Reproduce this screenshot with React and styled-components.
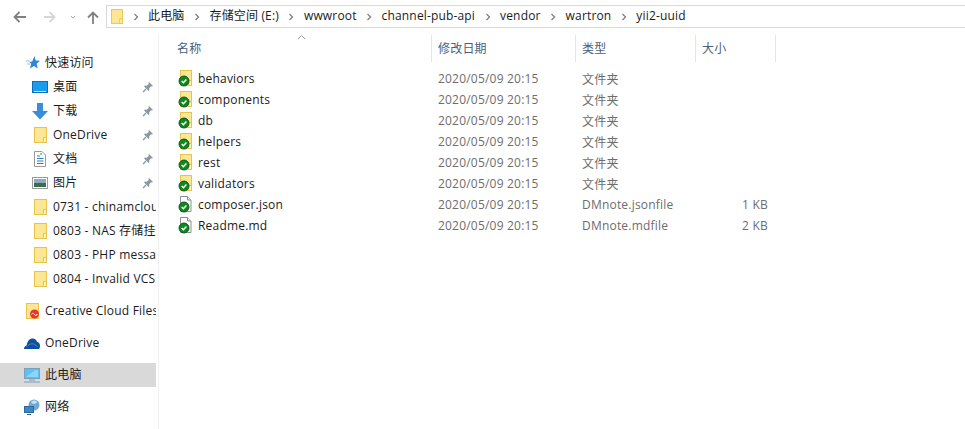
import React from 'react';
import styled, { createGlobalStyle } from 'styled-components';

const GlobalStyle = createGlobalStyle`
  html, body { margin: 0; padding: 0; background: #fff; }
  body {
    font-family: "Open Sans", "Noto Sans CJK SC", sans-serif;
    font-size: 12px;
    letter-spacing: 0.2px;
    color: #1b1b1b;
  }
`;

const Window = styled.div`
  width: 965px;
  height: 429px;
  overflow: hidden;
  display: flex;
  flex-direction: column;
`;

const Toolbar = styled.div`
  height: 35px;
  flex: none;
  display: flex;
  align-items: flex-start;
  padding: 5px 0 0 9px;
  box-sizing: border-box;
`;

const NavButtons = styled.div`
  display: flex;
  align-items: center;
  height: 24px;
  width: 97px;
  flex: none;
`;

const NavButton = styled.span`
  display: flex;
  flex: none;
  width: ${(p) => p.$w}px;
  justify-content: center;
`;

const AddressBar = styled.div`
  flex: 1;
  height: 23px;
  margin-right: -2px;
  border: 1px solid #d9d9d9;
  box-sizing: border-box;
  display: flex;
  align-items: center;
  padding-left: 4px;
`;

const Crumb = styled.span`
  color: #1a1a1a;
  white-space: nowrap;
  font-size: 12px;
  letter-spacing: 0.16px;
  line-height: 18px;
  margin-top: -1px;
`;

const CrumbSep = styled.span`
  width: 25px;
  display: flex;
  justify-content: center;
  flex: none;
`;

const Body = styled.div`
  flex: 1;
  display: flex;
  min-height: 0;
`;

const Sidebar = styled.div`
  width: 159px;
  flex: none;
  box-sizing: border-box;
  border-right: 1px solid #f0f0f0;
  padding-top: 16px;
  display: flex;
  flex-direction: column;
`;

const NavRow = styled.div`
  width: 156px;
  height: 24px;
  flex: none;
  display: flex;
  align-items: center;
  overflow: hidden;
  position: relative;
  padding-left: ${(p) => (p.$child ? 32 : 24)}px;
  margin-top: ${(p) => p.$gap || 0}px;
  box-sizing: border-box;
  background: ${(p) => (p.$active ? '#d9d9d9' : 'transparent')};
`;

const NavIcon = styled.span`
  width: 21px;
  height: 18px;
  flex: none;
  display: flex;
  align-items: center;
  padding-left: ${(p) => p.$inset || 0}px;
  box-sizing: border-box;
`;

const NavLabel = styled.span`
  white-space: nowrap;
  color: #1b1b1b;
  margin-top: -2px;
`;

const PinSlot = styled.span`
  position: absolute;
  left: 142px;
  top: 5px;
  width: 12px;
  height: 12px;
`;

const Main = styled.div`
  flex: 1;
  min-width: 0;
  display: flex;
  flex-direction: column;
`;

const HeaderRow = styled.div`
  height: 27px;
  display: flex;
  position: relative;
  flex: none;
  margin-bottom: 6px;
`;

const HeaderCell = styled.div`
  width: ${(p) => p.$w}px;
  box-sizing: border-box;
  padding-left: ${(p) => p.$pl || 6}px;
  padding-bottom: 2px;
  border-right: 1px solid #e5e5e5;
  color: #4c607a;
  display: flex;
  align-items: center;
  flex: none;
`;

const SortCaret = styled.svg`
  position: absolute;
  left: 138px;
  top: -1px;
`;

const FileRow = styled.div`
  display: flex;
  height: 21px;
  align-items: center;
  flex: none;
`;

const NameCell = styled.div`
  width: 272px;
  box-sizing: border-box;
  padding-left: 19px;
  display: flex;
  align-items: center;
  flex: none;
  color: #1b1b1b;
`;

const FileIconSlot = styled.span`
  width: 20px;
  height: 18px;
  margin-top: 1px;
  flex: none;
  display: block;
`;

const Cell = styled.div`
  width: ${(p) => p.$w}px;
  box-sizing: border-box;
  padding-left: 7px;
  flex: none;
  color: #6d6d6d;
  white-space: nowrap;
`;

const SizeCell = styled.div`
  width: 73px;
  flex: none;
  text-align: right;
  color: #6d6d6d;
  white-space: nowrap;
`;

const Chevron = () => (
  <svg width="6" height="8" viewBox="0 0 6 8">
    <path d="M1.5 1l3 3-3 3" fill="none" stroke="#808080" strokeWidth="1.3" />
  </svg>
);

const Folder = ({ size = 13 }) => (
  <svg width={size} height={size + 3} viewBox="0 0 13 16">
    <rect x="0.5" y="0.5" width="12" height="15" fill="#fde694" stroke="#e9c44d" />
    <rect x="9.5" y="10.5" width="3" height="5" fill="#fff3c4" stroke="#e9c44d" />
  </svg>
);

const PinIcon = () => (
  <svg width="12" height="12" viewBox="0 0 12 12">
    <path d="M7 1l4 4-1 .6-1-.3L7.200 7.200l.2 1.900-.8.8L2.100 5.400l.8-.8 1.900.2L6.700 2.900l-.3-1z" fill="#8a97a6" />
    <path d="M4 8L1 11" stroke="#8a97a6" strokeWidth="1.200" />
  </svg>
);

const SyncBadge = () => (
  <g>
    <circle cx="6" cy="11" r="5" fill="#0b8a1f" stroke="#0a4f16" strokeWidth="0.900" />
    <path d="M3.700 11l1.700 1.700 3-3.200" fill="none" stroke="#fff" strokeWidth="1.500" />
  </g>
);

const SyncFolder = () => (
  <svg width="16" height="18" viewBox="0 0 16 18">
    <rect x="2.500" y="0.500" width="11" height="15" fill="#fde694" stroke="#e9c44d" />
    <rect x="10.500" y="10.500" width="3" height="5" fill="#fff3c4" stroke="#e9c44d" />
    <SyncBadge />
  </svg>
);

const SyncDoc = () => (
  <svg width="16" height="18" viewBox="0 0 16 18">
    <path d="M2.500.5h7l3.500 3.500v11.500H2.500z" fill="#fff" stroke="#8f8f8f" />
    <path d="M9.500.5V4H13" fill="#eee" stroke="#8f8f8f" />
    <SyncBadge />
  </svg>
);

const StarIcon = () => (
  <svg width="14" height="14" viewBox="0 0 14 14">
    <path d="M8.500 0l1.200 4.500 4.300.3-3.400 2.900 1.200 4.800-3.800-2.600-4 2.600 1.200-4.800-1.800-1.500 2.900-.9z" fill="#2f86d8" />
    <path d="M0 5h4M1 8h3" stroke="#8cc4f0" strokeWidth="1" />
  </svg>
);

const DesktopIcon = () => (
  <svg width="16" height="13" viewBox="0 0 16 13">
    <rect x="0.500" y="0.500" width="15" height="11" fill="#1a9cf0" stroke="#0f6fb8" />
    <path d="M2 10.500h12" stroke="#bfe3fb" />
  </svg>
);

const DownloadIcon = () => (
  <svg width="16" height="17" viewBox="0 0 16 17">
    <path d="M5 0h6v8h5l-8 8.500L0 8h5z" fill="#3a8ddc" />
  </svg>
);

const DocsIcon = () => (
  <svg width="12" height="16" viewBox="0 0 12 16">
    <path d="M.5.5h7.500l3.500 3.500v11.500H.5z" fill="#fff" stroke="#9a9a9a" />
    <path d="M3 5h3M6 3h2M3 7.500h6.500M3 10h6.500M3 12.500h6.500" stroke="#2f7fc8" strokeWidth="1" />
  </svg>
);

const PictureIcon = () => (
  <svg width="16" height="13" viewBox="0 0 16 13">
    <rect x="0.500" y="0.500" width="15" height="11" fill="#fff" stroke="#9a9a9a" />
    <rect x="2" y="2" width="12" height="4" fill="#8ea9c0" />
    <rect x="2" y="6" width="12" height="4" fill="#3f6a52" />
  </svg>
);

const CreativeIcon = () => (
  <svg width="14" height="16" viewBox="0 0 14 16">
    <rect x="0.500" y="0.500" width="12" height="15" fill="#fde694" stroke="#e9c44d" />
    <circle cx="8.500" cy="11" r="4.500" fill="#e8372c" />
    <path d="M5.500 11.500c1-2 2.500-1 3 0s2 1.500 3-.5" fill="none" stroke="#fff" strokeWidth="1" />
  </svg>
);

const CloudIcon = () => (
  <svg width="16" height="11" viewBox="0 0 16 11">
    <path d="M0 11c0-2 1-3 2.500-3.500C3.500 3 5.500.5 8.500.5c2.500 0 4 1.500 4.500 3.500 2 0 3 2 3 4 0 1-.3 2-.8 3z" fill="#0f4fa0" />
    <path d="M2.500 9c1.500-2 3.500-3.200 5.500-3.200 2 0 4 1 5.500 3.200" fill="none" stroke="#3f86d0" strokeWidth="1" />
  </svg>
);

const PcIcon = () => (
  <svg width="16" height="15" viewBox="0 0 16 15">
    <rect x="0.500" y="0.500" width="15" height="10" fill="#5cc0f5" stroke="#7ba0bd" />
    <path d="M2 9l9-7h3v7z" fill="#8ad6fa" />
    <path d="M5 12h6" stroke="#7ba0bd" />
    <path d="M0 14h16" stroke="#7ba0bd" />
  </svg>
);

const NetworkIcon = () => (
  <svg width="16" height="16" viewBox="0 0 16 16">
    <circle cx="10" cy="6" r="5.500" fill="#6fa9d6" />
    <path d="M7 3c2-2 5-2 6 0-1 2-4 3-6 0z" fill="#c9e2f3" />
    <rect x="0.500" y="7.500" width="9" height="6" fill="#3f86c4" stroke="#2c6798" />
    <path d="M3 15.500h4" stroke="#2c6798" />
  </svg>
);

const crumbs = ['此电脑', '存储空间 (E:)', 'wwwroot', 'channel-pub-api', 'vendor', 'wartron', 'yii2-uuid'];

const navItems = [
  { label: '快速访问', icon: <StarIcon />, inset: 2 },
  { label: '桌面', icon: <DesktopIcon />, child: true, pin: true },
  { label: '下载', icon: <DownloadIcon />, child: true, pin: true },
  { label: 'OneDrive', icon: <Folder />, child: true, pin: true, inset: 2 },
  { label: '文档', icon: <DocsIcon />, child: true, pin: true, inset: 2 },
  { label: '图片', icon: <PictureIcon />, child: true, pin: true },
  { label: '0731 - chinamcloud', icon: <Folder />, child: true, inset: 2 },
  { label: '0803 - NAS 存储挂载', icon: <Folder />, child: true, inset: 2 },
  { label: '0803 - PHP message', icon: <Folder />, child: true, inset: 2 },
  { label: '0804 - Invalid VCS', icon: <Folder />, child: true, inset: 2 },
  { label: 'Creative Cloud Files', icon: <CreativeIcon />, gap: 8, inset: 2 },
  { label: 'OneDrive', icon: <CloudIcon />, gap: 8 },
  { label: '此电脑', icon: <PcIcon />, gap: 8, active: true },
  { label: '网络', icon: <NetworkIcon />, gap: 8 },
];

const DATE = '2020/05/09 20:15';

const files = [
  { name: 'behaviors', type: '文件夹' },
  { name: 'components', type: '文件夹' },
  { name: 'db', type: '文件夹' },
  { name: 'helpers', type: '文件夹' },
  { name: 'rest', type: '文件夹' },
  { name: 'validators', type: '文件夹' },
  { name: 'composer.json', type: 'DMnote.jsonfile', size: '1 KB', doc: true },
  { name: 'Readme.md', type: 'DMnote.mdfile', size: '2 KB', doc: true },
];

export default function App() {
  return (
    <Window>
      <GlobalStyle />
      <Toolbar>
        <NavButtons>
          <NavButton $w={20}>
            <svg width="13" height="12" viewBox="0 0 13 12">
              <path d="M13 6H2M6.500 1L1.500 6l5 5" fill="none" stroke="#808080" strokeWidth="1.800" />
            </svg>
          </NavButton>
          <NavButton $w={41}>
            <svg width="12" height="12" viewBox="0 0 12 12">
              <path d="M0 6h10.500M5.500 1l5 5-5 5" fill="none" stroke="#d6d6d6" strokeWidth="1.800" />
            </svg>
          </NavButton>
          <NavButton $w={6}>
            <svg width="8" height="6" viewBox="0 0 8 6">
              <path d="M1 1.500l3 3 3-3" fill="none" stroke="#9a9a9a" strokeWidth="1.200" />
            </svg>
          </NavButton>
          <NavButton $w={34}>
            <svg width="12" height="13" viewBox="0 0 12 13">
              <path d="M6 13V2M1 6.500l5-5 5 5" fill="none" stroke="#808080" strokeWidth="1.800" />
            </svg>
          </NavButton>
        </NavButtons>
        <AddressBar>
          <Folder size={12} />
          {crumbs.map((c) => (
            <React.Fragment key={c}>
              <CrumbSep><Chevron /></CrumbSep>
              <Crumb>{c}</Crumb>
            </React.Fragment>
          ))}
        </AddressBar>
      </Toolbar>
      <Body>
        <Sidebar>
          {navItems.map((item) => (
            <NavRow key={item.label + item.gap} $child={item.child} $gap={item.gap} $active={item.active}>
              <NavIcon $inset={item.inset}>{item.icon}</NavIcon>
              <NavLabel>{item.label}</NavLabel>
              {item.pin && <PinSlot><PinIcon /></PinSlot>}
            </NavRow>
          ))}
        </Sidebar>
        <Main>
          <HeaderRow>
            <HeaderCell $w={273} $pl={18}>名称</HeaderCell>
            <HeaderCell $w={144}>修改日期</HeaderCell>
            <HeaderCell $w={120}>类型</HeaderCell>
            <HeaderCell $w={80}>大小</HeaderCell>
            <SortCaret width="9" height="6" viewBox="0 0 9 6">
              <path d="M1 5l3.500-3.500L8 5" fill="none" stroke="#9a9a9a" />
            </SortCaret>
          </HeaderRow>
          {files.map((f) => (
            <FileRow key={f.name}>
              <NameCell>
                <FileIconSlot>{f.doc ? <SyncDoc /> : <SyncFolder />}</FileIconSlot>
                {f.name}
              </NameCell>
              <Cell $w={144}>{DATE}</Cell>
              <Cell $w={120}>{f.type}</Cell>
              <SizeCell>{f.size}</SizeCell>
            </FileRow>
          ))}
        </Main>
      </Body>
    </Window>
  );
}
